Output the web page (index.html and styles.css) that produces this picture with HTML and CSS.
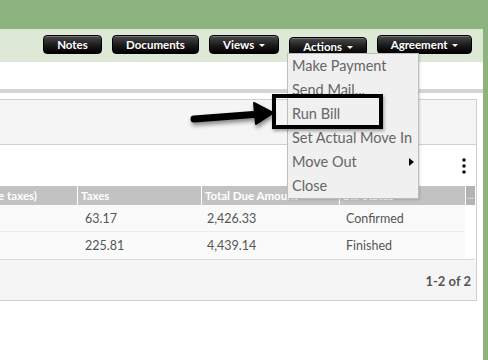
FILE: index.html
```html
<!DOCTYPE html>
<html lang="en">
<head>
  <meta charset="UTF-8" />
  <meta name="viewport" content="width=device-width, initial-scale=1.0" />
  <title>Agreement</title>
  <link rel="stylesheet" href="styles.css">
</head>
<body>
  <div class="page">
    <div class="toolbar">
      <button class="btn">Notes</button>
      <button class="btn">Documents</button>
      <button class="btn">Views <span class="caret"></span></button>
      <div class="btn-wrap">
        <button class="btn">Actions <span class="caret"></span></button>
        <ul class="menu">
          <li>Make Payment</li>
          <li>Send Mail...</li>
          <li>Run Bill</li>
          <li>Set Actual Move In</li>
          <li class="has-sub">Move Out <span class="sub-arrow"></span></li>
          <li>Close</li>
        </ul>
      </div>
      <button class="btn">Agreement <span class="caret"></span></button>
    </div>

    <div class="divider"></div>

    <div class="panel">
      <div class="panel-head"></div>
      <div class="panel-tools">
        <svg class="kebab" width="4" height="16" viewBox="0 0 4 16"><circle cx="2" cy="2" r="1.8"/><circle cx="2" cy="8" r="1.8"/><circle cx="2" cy="14" r="1.8"/></svg>
      </div>
      <div class="grid">
        <div class="th first">Amount (exclude taxes)</div>
        <div class="th">Taxes</div>
        <div class="th">Total Due Amount</div>
        <div class="th">Bill Status</div>
        <div class="th more">...</div>

        <div class="td"></div>
        <div class="td">63.17</div>
        <div class="td">2,426.33</div>
        <div class="td">Confirmed</div>
        <div class="td blank"></div>

        <div class="td"></div>
        <div class="td">225.81</div>
        <div class="td">4,439.14</div>
        <div class="td">Finished</div>
        <div class="td blank"></div>
      </div>
      <div class="panel-foot">1-2 of 2</div>
    </div>
  </div>

  <!-- annotation: arrow + box pointing at "Run Bill" -->
  <div class="callout-box"></div>
  <svg class="callout-arrow" width="100" height="40" viewBox="0 0 100 40">
    <line x1="6" y1="21" x2="72" y2="16" stroke="#000" stroke-width="7" stroke-linecap="round"/>
    <polygon points="66,5 85,15 68,26" fill="#000" stroke="#000" stroke-width="2" stroke-linejoin="round"/>
  </svg>
</body>
</html>
```

FILE: styles.css
```css
body {
  margin: 0;
  background: #8db47f;
  font-family: Lato, "Open Sans", sans-serif;
  overflow: hidden;
}
.page {
  margin: 29px 5px 0 0;
  background: #fff;
  height: 331px;
}
/* toolbar */
.toolbar {
  display: flex;
  justify-content: flex-end;
  gap: 10px;
  height: 33px;
  padding: 6px 11px 0 0;
  box-sizing: border-box;
  background: #dde8d6;
}
.btn {
  height: 19px;
  padding: 0;
  border: 1px solid #000;
  border-radius: 4px;
  background: linear-gradient(#4a4a4a, #1a1a1a 55%, #000);
  box-shadow: inset 0 1px 0 rgba(255,255,255,0.25);
  color: #fff;
  font-family: Lato, sans-serif;
  font-size: 11.5px;
  font-weight: 700;
  line-height: 17px;
  white-space: nowrap;
}
.toolbar > .btn:nth-child(1) { width: 59px; }
.toolbar > .btn:nth-child(2) { width: 87px; }
.toolbar > .btn:nth-child(3) { width: 70px; }
.btn-wrap .btn { width: 78px; }
.toolbar > .btn:nth-child(5) { width: 95px; }
.caret {
  display: inline-block;
  width: 0;
  height: 0;
  margin-left: 2px;
  vertical-align: 2px;
  border-left: 3px solid transparent;
  border-right: 3px solid transparent;
  border-top: 3px solid #fff;
}
.btn-wrap { position: relative; }
.menu {
  position: absolute;
  top: 18px;
  left: -2px;
  z-index: 5;
  width: 130px;
  margin: 0;
  padding: 0;
  list-style: none;
  background: #f0f0f0;
  border: 1px solid #bdbdbd;
  box-shadow: 1px 1px 2px rgba(0,0,0,0.15);
}
.menu li {
  height: 24px;
  padding-left: 4px;
  color: #666;
  font-size: 14.5px;
  line-height: 24px;
  white-space: nowrap;
  position: relative;
}
.sub-arrow {
  position: absolute;
  right: 4px;
  top: 8px;
  border-top: 4px solid transparent;
  border-bottom: 4px solid transparent;
  border-left: 5px solid #000;
}
/* content */
.divider {
  height: 4px;
  margin-top: 27px;
  background: #d4d4d4;
}
.panel {
  margin: 6px 6px 0 -120px;
  border: 1px solid #cfcfcf;
}
.panel-head {
  height: 44px;
  background: #f5f5f5;
  border-bottom: 1px solid #cfcfcf;
}
.panel-tools {
  display: flex;
  justify-content: flex-end;
  align-items: center;
  height: 41px;
  padding-right: 10px;
}
.kebab { fill: #111; }
.grid {
  display: grid;
  grid-template-columns: 196px 124px 138px 126px 10px;
  border-bottom: 1px solid #d8d8d8;
  margin-right: 1px;
}
.th {
  height: 19px;
  padding-left: 3px;
  background: #c2c2c2;
  border-left: 1px solid #fff;
  color: #fff;
  font-size: 11.5px;
  font-weight: 700;
  line-height: 19px;
  white-space: nowrap;
  overflow: hidden;
}
.th.first {
  border-left: 0;
  text-align: right;
  padding-right: 40px;
}
.th.more {
  padding: 0;
  background: #b3b3b3;
  text-align: center;
  font-size: 9px;
  color: #e8e8e8;
}
.td {
  height: 26px;
  padding-left: 8px;
  background: #fafafa;
  border-bottom: 1px solid #ececec;
  color: #555;
  font-size: 12.5px;
  line-height: 27px;
}
.td:nth-child(5n+3) { padding-left: 6px; }
.td:nth-child(5n+4) { padding-left: 7px; }
.grid .td:nth-last-child(-n+5) { border-bottom: 0; height: 27px; }
.td.blank { background: #fff; border-bottom-color: #fff; }
.panel-foot {
  height: 40px;
  padding-right: 5px;
  background: #f5f5f5;
  color: #555;
  font-size: 13px;
  font-weight: 700;
  line-height: 42px;
  text-align: right;
}
/* annotation overlay */
.callout-box {
  position: absolute;
  z-index: 10;
  left: 272px;
  top: 94px;
  width: 103px;
  height: 27px;
  border: 4px solid #000;
  box-shadow: 1px 2px 3px rgba(0,0,0,0.35);
}
.callout-arrow {
  position: absolute;
  z-index: 10;
  left: 188px;
  top: 98px;
  filter: drop-shadow(1px 3px 2px rgba(0,0,0,0.45));
}
```
